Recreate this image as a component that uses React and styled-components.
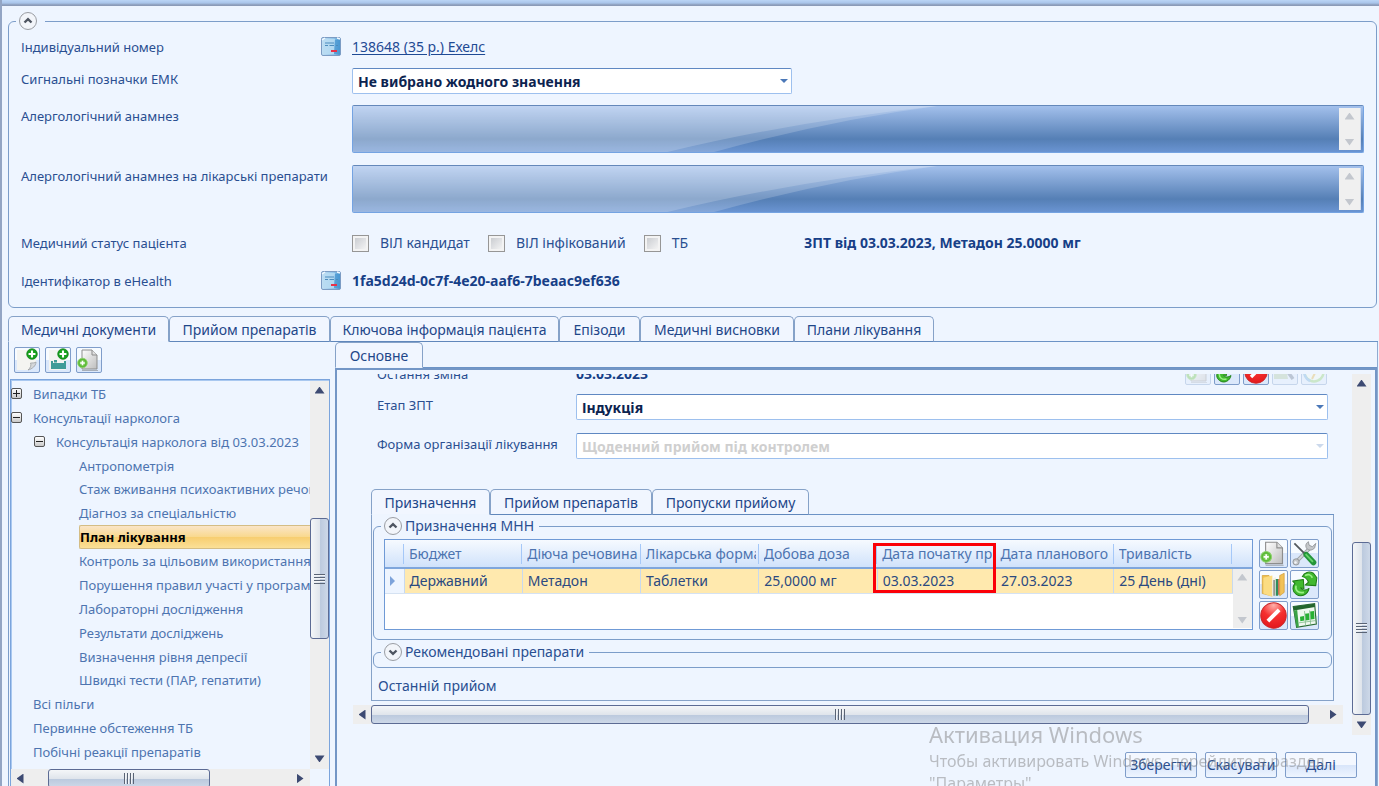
import React from 'react';
import styled, { createGlobalStyle, css } from 'styled-components';

const GlobalStyle = createGlobalStyle`
* { box-sizing: border-box; }
body {
    margin: 0;
    overflow: hidden;
    font-family: "Noto Sans", "Open Sans", sans-serif;
    font-size: 14px;
    line-height: 22px;
    color: #2a4f91;
}
button, select, textarea, input { font: inherit; color: inherit; margin: 0; }
`

const tree = [
    { text: 'Випадки ТБ', level: 0, mark: '+' },
    { text: 'Консультації нарколога', level: 0, mark: '-' },
    { text: 'Консультація нарколога від 03.03.2023', level: 1, mark: '-' },
    { text: 'Антропометрія', level: 2 },
    { text: 'Стаж вживання психоактивних речовин', level: 2 },
    { text: 'Діагноз за спеціальністю', level: 2 },
    { text: 'План лікування', level: 2, selected: true },
    { text: 'Контроль за цільовим використанням', level: 2 },
    { text: 'Порушення правил участі у програмі', level: 2 },
    { text: 'Лабораторні дослідження', level: 2 },
    { text: 'Результати досліджень', level: 2 },
    { text: 'Визначення рівня депресії', level: 2 },
    { text: 'Швидкі тести (ПАР, гепатити)', level: 2 },
    { text: 'Всі пільги', level: 0 },
    { text: 'Первинне обстеження ТБ', level: 0 },
    { text: 'Побічні реакції препаратів', level: 0 },
];

const mainTabs = [
    ['Медичні документи', 161],
    ['Прийом препаратів', 161],
    ['Ключова інформація пацієнта', 229],
    ['Епізоди', 81],
    ['Медичні висновки', 154],
    ['Плани лікування', 140],
];

const innerTabs = [
    ['Призначення', 119],
    ['Прийом препаратів', 162],
    ['Пропуски прийому', 157],
];

const columns = [
    ['Бюджет', 'Державний'],
    ['Діюча речовина', 'Метадон'],
    ['Лікарська форма', 'Таблетки'],
    ['Добова доза', '25,0000 мг'],
    ['Дата початку пр', '03.03.2023'],
    ['Дата планового', '27.03.2023'],
    ['Тривалість', '25 День (дні)'],
];

/* ---------- icons ---------- */

const CardIcon = () => (
    <svg width="20" height="20" viewBox="0 0 20 20">
        <defs>
            <linearGradient id="card" x1="0" y1="0" x2="1" y2="0">
                <stop offset="0" stopColor="#c3dff3" />
                <stop offset="0.65" stopColor="#8fc3e8" />
                <stop offset="1" stopColor="#3f90cf" />
            </linearGradient>
        </defs>
        <rect x="0.5" y="0.5" width="19" height="18" rx="1.5" fill="url(#card)" stroke="#7c9cc4" />
        <path d="M2 17V3l2-1h10L13 17z" fill="#b9dcf3" opacity="0.8" />
        <path d="M14 3h5v14h-6z" fill="#4b98d2" opacity="0.75" />
        <path d="M4 6h9M4 8.500h3M8.500 8.500h4.500M15 8.500h2" stroke="#4c8cbd" strokeWidth="1.200" />
        <path d="M10 14h6" stroke="#e8324a" strokeWidth="2" />
        <path d="M1 3l3-2M16 1l3 1" stroke="#f2f9ff" strokeWidth="1.500" />
    </svg>
);

function Plus({ cx, cy, r }) {
    const k = r * 0.65;
    return (
        <g>
            <circle cx={cx} cy={cy} r={r} fill="#17a01d" stroke="#0c7c14" strokeWidth="0.700" />
            <path
                d={`M${cx - k} ${cy}h${k * 2}M${cx} ${cy - k}v${k * 2}`}
                stroke="#fff"
                strokeWidth={r * 0.4}
            />
        </g>
    );
}

const NewPageIcon = () => (
    <svg width="24" height="24" viewBox="0 0 24 24">
        <path d="M2 2h19v13l-7 7H2z" fill="#f4f4f1" />
        <path d="M21 14c-1 1-4 1-5.500 1 1 2 0 5-2.500 7 4-1 8-4 8-8z" fill="#d6d8da" stroke="#9c9fa3" strokeWidth="0.800" />
        <Plus cx={17} cy={6} r={5.3} />
    </svg>
);

const NewBedIcon = () => (
    <svg width="24" height="24" viewBox="0 0 24 24">
        <rect x="3" y="2" width="17" height="20" fill="#f4f4f1" />
        <path d="M5 13h2v2h11v-2h2v6H5z" fill="#3f9c98" />
        <path d="M8 12h3v2.500H8z" fill="#3f9c98" />
        <path d="M5 20h15" stroke="#3f9c98" strokeWidth="2" />
        <Plus cx={17} cy={6} r={5.3} />
    </svg>
);

const PageIcon = () => (
    <svg width="24" height="24" viewBox="0 0 24 24">
        <defs>
            <linearGradient id="page" x1="0" y1="0" x2="1" y2="1">
                <stop offset="0" stopColor="#ffffff" />
                <stop offset="1" stopColor="#bdbdbd" />
            </linearGradient>
        </defs>
        <path d="M5 2h10l5 5v14H5z" fill="url(#page)" stroke="#8d8d8d" />
        <path d="M15 2v5h5" fill="#e0e0e0" stroke="#8d8d8d" />
        <path d="M5 22.500h16" stroke="#777" opacity="0.500" />
        <circle cx="5.500" cy="15" r="4.800" fill="#5dbb38" stroke="#8ed16f" strokeWidth="0.900" />
        <circle cx="5.500" cy="15" r="2.800" fill="#7fcc5c" />
        <path d="M3.200 15h4.600M5.500 12.700v4.600" stroke="#fff" strokeWidth="1.500" />
    </svg>
);

const ToolsIcon = () => (
    <svg width="24" height="24" viewBox="0 0 24 24">
        <path d="M17 7L5 19" stroke="#9fa4a9" strokeWidth="3.200" />
        <path d="M17 7L5 19" stroke="#d3d6d9" strokeWidth="1.400" />
        <path d="M15.500 1.500c-2.500 1.500-3 4-1.500 6s5 2 7-.500l1-4-3 3-3-1.500z" fill="#c4c7ca" stroke="#888c90" strokeWidth="0.700" />
        <circle cx="4.500" cy="19.500" r="2.800" fill="#c4c7ca" stroke="#888c90" strokeWidth="0.700" />
        <circle cx="4" cy="20" r="1.100" fill="#f4f7fb" />
        <path d="M3 3l10 10" stroke="#53585d" strokeWidth="1.600" />
        <path d="M13.500 13l6.500 7" stroke="#24953a" strokeWidth="5" strokeLinecap="round" />
        <path d="M13 12.500l6.500 7" stroke="#66d66a" strokeWidth="1.600" />
    </svg>
);

const FolderIcon = () => (
    <svg width="24" height="24" viewBox="0 0 24 24">
        <path d="M2 4h6l2 2v16l-8-2z" fill="#efc04f" stroke="#d09d33" strokeWidth="0.600" />
        <path d="M3 6l8-2v19l-8-3z" fill="#fbdc82" />
        <path d="M11 7l3-2v17h-3z" fill="#f3f1e4" />
        <path d="M12.500 8v14" stroke="#555" strokeWidth="0.900" />
        <path d="M14 7h2.200v15H14z" fill="#2f8d5c" />
        <path d="M16.200 7h1.300v14h-1.300z" fill="#d05a3a" />
        <path d="M17.500 4l4-2v17l-4 3z" fill="#f1c158" stroke="#cf9a34" strokeWidth="0.600" />
    </svg>
);

const RefreshIcon = () => (
    <svg width="24" height="24" viewBox="0 0 24 24">
        <g fill="#41b92f" stroke="#1f7d16" strokeWidth="0.900" strokeLinejoin="round">
            <path d="M10 5C12 1 16 0 20 2l3 4-1 7-9.500-.500 3-2.500C14.500 7 13 5.500 10 5z" />
            <path d="M1.500 9L11 7.500l.500 8-3-.500c1 2.500 5 2.500 7.500.500C15 21 9 24 4.500 20.500 1 18 1 14 3.500 11z" />
        </g>
        <path d="M12.500 4c3-1.500 5-1 6.500 2M4.500 13c-1 5 3 7 7 6" stroke="#9af084" strokeWidth="1.500" fill="none" />
    </svg>
);

const StopIcon = () => (
    <svg width="24" height="24" viewBox="0 0 24 24">
        <defs>
            <radialGradient id="stop" cx="0.5" cy="0.1" r="0.9">
                <stop offset="0" stopColor="#ffb0aa" />
                <stop offset="0.5" stopColor="#f53030" />
                <stop offset="1" stopColor="#e3181c" />
            </radialGradient>
        </defs>
        <circle cx="12" cy="12" r="11.300" fill="url(#stop)" stroke="#c8282b" strokeWidth="0.900" />
        <path d="M7 17L17 7" stroke="#fff" strokeWidth="3.400" />
    </svg>
);

const SheetIcon = () => (
    <svg width="24" height="24" viewBox="0 0 24 24">
        <path d="M2 4l19-2.500 1.500 18L5 22.500z" fill="#eef8ee" stroke="#2b6b34" strokeWidth="1" />
        <path d="M2 4l19-2.500.300 3L2.500 7.500z" fill="#23652d" />
        <path d="M2.500 7.500L5.500 7l1.500 15-2 .500z" fill="#3aa345" />
        <path d="M8 13l3.500-.500.300 4-3.500.500zM12.500 10.500l3.500-.500.400 6-3.500.500zM17 8.500l3.500-.500.400 7-3.500.500z" fill="#27b034" />
        <path d="M7 18.500l15-2M12 8l1 13.500M16.500 7.500l1 13.500" stroke="#6fae77" strokeWidth="0.600" />
    </svg>
);

const ImageIcon = () => (
    <svg width="24" height="24" viewBox="0 0 24 24">
        <path d="M1 19V9h12l2 10z" fill="#a9c39c" />
        <path d="M12 8l8 11" stroke="#62728a" strokeWidth="3.500" />
    </svg>
);

const ClockIcon = () => (
    <svg width="24" height="24" viewBox="0 0 24 24">
        <circle cx="12" cy="12" r="9.500" fill="#f3f8ef" stroke="#8ccf6b" strokeWidth="2.500" />
        <path d="M3 9a9.500 9.500 0 0 0 5 12" stroke="#6aa9de" strokeWidth="2.500" fill="none" />
        <path d="M10 19l6-12" stroke="#e2b33c" strokeWidth="2" />
    </svg>
);

const Expander = ({ open, label }) => (
    <RoundButton aria-label={label}>
        <svg width="10" height="10" viewBox="0 0 10 10">
            <path
                d={open ? 'M1.500 6.500L5 3.200l3.500 3.300' : 'M1.500 3.500L5 6.800l3.500-3.300'}
                fill="none"
                stroke="#4e5561"
                strokeWidth="2.400"
            />
        </svg>
    </RoundButton>
);

/* ---------- scroll bar ---------- */

function ScrollBar({ horizontal, parts }) {
    return (
        <Track $horizontal={horizontal} $parts={parts} aria-hidden="true">
            <Arrow $dir={horizontal ? 'left' : 'up'} $muted={!parts} />
            {parts && <i />}
            {parts && <Thumb $horizontal={horizontal}><Grip $horizontal={horizontal} /></Thumb>}
            <i />
            <Arrow $dir={horizontal ? 'right' : 'down'} $muted={!parts} />
        </Track>
    );
}

function TabStrip({ tabs }) {
    return (
        <Tabs role="tablist">
            {tabs.map(([text, width], i) => (
                <Tab key={text} role="tab" aria-selected={i === 0} $active={i === 0} $width={width}>{text}</Tab>
            ))}
        </Tabs>
    );
}

function GlossyField({ id }) {
    return (
        <Glossy>
            <svg viewBox="0 0 1012 47" preserveAspectRatio="none" aria-hidden="true">
                <path d="M0 0H585Q440 16 315 47H0z" fill="#fff" opacity="0.18" />
                <path d="M0 0H586Q480 14 362 47H0z" fill="#fff" opacity="0.18" />
            </svg>
            <textarea id={id} readOnly />
            <ScrollBar />
        </Glossy>
    );
}

/* ---------- page ---------- */

export default function App() {
    return (
        <Window>
            <GlobalStyle />
            <Page>
                <Group>
                    <legend><Expander open label="Згорнути" /></legend>
                    <Patient />
                </Group>
                <TabArea>
                    <TabStrip tabs={mainTabs} />
                    <Workspace>
                        <Sidebar />
                        <Plan />
                    </Workspace>
                </TabArea>
            </Page>
            <Watermark>
                <strong>Активация Windows</strong>
                <span>Чтобы активировать Windows, перейдите в раздел</span>
                <span>"Параметры".</span>
            </Watermark>
        </Window>
    );
}

function Patient() {
    return (
        <PatientRows>
            <PatientRow $height={32}>
                <Caption as="span">Індивідуальний номер</Caption>
                <CardIcon />
                <a href="#patient">138648 (35 р.) Ехелс</a>
            </PatientRow>
            <PatientRow $height={37} $top>
                <Caption htmlFor="signals">Сигнальні позначки ЕМК</Caption>
                <i />
                <Combo $narrow>
                    <select id="signals"><option>Не вибрано жодного значення</option></select>
                </Combo>
            </PatientRow>
            <PatientRow $height={60} $top>
                <Caption htmlFor="allergy">Алергологічний анамнез</Caption>
                <i />
                <GlossyField id="allergy" />
            </PatientRow>
            <PatientRow $height={60} $top>
                <Caption htmlFor="drugs">Алергологічний анамнез на лікарські препарати</Caption>
                <i />
                <GlossyField id="drugs" />
            </PatientRow>
            <PatientRow $height={46}>
                <Caption as="span">Медичний статус пацієнта</Caption>
                <i />
                <Status>
                    <Checks>
                        {['ВІЛ кандидат', 'ВІЛ інфікований', 'ТБ'].map(text => (
                            <Check key={text}><input type="checkbox" />{text}</Check>
                        ))}
                    </Checks>
                    <b>ЗПТ від 03.03.2023, Метадон 25.0000 мг</b>
                </Status>
            </PatientRow>
            <PatientRow $height={30}>
                <Caption as="span">Ідентифікатор в eHealth</Caption>
                <CardIcon />
                <b>1fa5d24d-0c7f-4e20-aaf6-7beaac9ef636</b>
            </PatientRow>
        </PatientRows>
    );
}

function Sidebar() {
    return (
        <Side>
            <SideTools>
                <ToolButton aria-label="Новий документ"><NewPageIcon /></ToolButton>
                <ToolButton aria-label="Новий випадок"><NewBedIcon /></ToolButton>
                <ToolButton aria-label="Додати"><PageIcon /></ToolButton>
            </SideTools>
            <TreeBox>
                <TreeList>
                    {tree.map(item => (
                        <TreeItem key={item.text} $level={item.level}>
                            {item.mark && <Mark aria-label={item.mark === '+' ? 'Розгорнути' : 'Згорнути'} $plus={item.mark === '+'} />}
                            <TreeText $selected={item.selected}>{item.text}</TreeText>
                        </TreeItem>
                    ))}
                </TreeList>
                <ScrollBar parts={[118, 120, 109]} />
                <ScrollBar horizontal parts={[19, 161, 80]} />
            </TreeBox>
        </Side>
    );
}

function Plan() {
    return (
        <PlanPane>
            <Tabs role="tablist">
                <Tab role="tab" aria-selected $active $width={88}>Основне</Tab>
            </Tabs>
            <PlanBody>
                <ScrollArea>
                    <div>
                        <Form>
                            <CutRow>
                                <Caption as="span">Остання зміна</Caption>
                                <b>03.03.2023</b>
                                <CutTools>
                                    <ToolButton disabled aria-label="Додати"><PageIcon /></ToolButton>
                                    <ToolButton aria-label="Оновити"><RefreshIcon /></ToolButton>
                                    <ToolButton aria-label="Видалити"><StopIcon /></ToolButton>
                                    <ToolButton disabled aria-label="Переглянути"><ImageIcon /></ToolButton>
                                    <ToolButton disabled aria-label="Історія"><ClockIcon /></ToolButton>
                                </CutTools>
                            </CutRow>
                            <FormRow>
                                <Caption htmlFor="stage">Етап ЗПТ</Caption>
                                <Combo>
                                    <select id="stage"><option>Індукція</option></select>
                                </Combo>
                            </FormRow>
                            <FormRow>
                                <Caption htmlFor="form">Форма організації лікування</Caption>
                                <Combo $disabled>
                                    <select id="form" disabled><option>Щоденний прийом під контролем</option></select>
                                </Combo>
                            </FormRow>
                        </Form>
                        <Prescriptions />
                        <ScrollBar horizontal parts={[0, 940, 14]} />
                    </div>
                    <ScrollBar parts={[149, 172, 0]} />
                </ScrollArea>
                <Actions>
                    <button>Зберегти</button>
                    <button>Скасувати</button>
                    <button>Далі</button>
                </Actions>
            </PlanBody>
        </PlanPane>
    );
}

function Prescriptions() {
    return (
        <Inner>
            <TabStrip tabs={innerTabs} />
            <InnerPanel>
                <Group $inner>
                    <legend><Expander open label="Згорнути" />Призначення МНН</legend>
                    <GridRow>
                        <GridBox>
                            <DataTable>
                                <colgroup>
                                    <col width="19" />
                                    {columns.map(([name]) => <col key={name} />)}
                                    <col width="20" />
                                </colgroup>
                                <thead>
                                    <tr>
                                        <th aria-label="Рядок" />
                                        {columns.map(([name], i) => (
                                            <th key={name} scope="col">
                                                <span>{name}</span>
                                                {i === 4 && <Highlight />}
                                            </th>
                                        ))}
                                        <th aria-label="Прокрутка" />
                                    </tr>
                                </thead>
                                <tbody>
                                    <tr>
                                        <Pointer />
                                        {columns.map(([name, value]) => <td key={name}>{value}</td>)}
                                        <ScrollCell rowSpan="2"><ScrollBar /></ScrollCell>
                                    </tr>
                                    <tr><Filler colSpan="8" /></tr>
                                </tbody>
                            </DataTable>
                        </GridBox>
                        <GridTools>
                            <ToolButton $large aria-label="Додати"><PageIcon /></ToolButton>
                            <ToolButton $large aria-label="Налаштувати"><ToolsIcon /></ToolButton>
                            <ToolButton $large aria-label="Архів"><FolderIcon /></ToolButton>
                            <ToolButton $large aria-label="Оновити"><RefreshIcon /></ToolButton>
                            <ToolButton $large aria-label="Видалити"><StopIcon /></ToolButton>
                            <ToolButton $large aria-label="Експорт"><SheetIcon /></ToolButton>
                        </GridTools>
                    </GridRow>
                </Group>
                <Group $inner>
                    <legend><Expander label="Розгорнути" />Рекомендовані препарати</legend>
                    <Collapsed />
                </Group>
                <LastIntake>Останній прийом</LastIntake>
            </InnerPanel>
        </Inner>
    );
}

/* ---------- styles ---------- */

const Window = styled.div`
    height: 100vh;
    display: flex;
    overflow: hidden;
    border-left: 2px solid #93a5c4;
    padding-top: 6px;
    background: linear-gradient(#bbd5f6 0, #a9c5ea 3px, #8b9bb8 5px, #8b9bb8 6px, #eef5ff 6px);
`

const Page = styled.main`
    flex: 1;
    min-width: 0;
    display: flex;
    flex-direction: column;
    padding: 6px 1px 0 6px;
`

const Group = styled.fieldset`
    min-width: 0;
    margin: 0 ${props => props.$inner ? "0" : "1px"} 0 0;
    padding: 0 12px 0 10px;
    border: 1px solid #7c9dc9;
    border-radius: 6px;
    legend {
        display: flex;
        align-items: center;
        gap: 3px;
        height: 18px;
        margin-left: -3px;
        padding: 0 ${props => props.$inner ? "5px" : "8px"} 0 3px;
    }
    & + & { margin-top: 3px; }
`

const RoundButton = styled.button`
    width: 18px;
    height: 18px;
    display: grid;
    place-items: center;
    padding: 0;
    border: 1px solid #9a9da3;
    border-radius: 50%;
    background: #f2f5fa;
`

const Caption = styled.label`
    font-size: 13px;
`

const PatientRows = styled.div`
    padding: 1px 0 11px 2px;
`

const PatientRow = styled.div`
    display: grid;
    grid-template-columns: 300px 31px minmax(0, 1fr);
    align-items: ${props => props.$top ? "start" : "center"};
    min-height: ${props => props.$height}px;
    padding-top: ${props => props.$top ? "5px" : "0"};
    white-space: nowrap;
    a { color: #1f4a94; text-underline-offset: 2px; }
    b { color: #173f87; }
`

const Combo = styled.div`
    position: relative;
    height: 26px;
    width: ${props => props.$narrow ? "440px" : "auto"};
    max-width: 100%;
    select {
        width: 100%;
        height: 100%;
        appearance: none;
        padding: 2px 20px 0 5px;
        border: 1px solid #9dc0ee;
        border-top-color: #5f88c2;
        border-radius: 2px;
        background: #fff;
        color: #0c234f;
        font-weight: 700;
        opacity: 1;
    }
    select:disabled { color: #cfcfcf; }
    &:after {
        content: "";
        position: absolute;
        right: 4px;
        top: 11px;
        border: 4px solid transparent;
        border-top-color: ${props => props.$disabled ? "#ccd9ec" : "#4b78b8"};
        border-bottom: 0;
    }
`

const Glossy = styled.div`
    position: relative;
    display: flex;
    height: 48px;
    padding: 2px;
    border: 1px solid #74a3e2;
    border-top-color: #6488ba;
    border-radius: 2px;
    background: linear-gradient(#a3c0ec, #557fb5 72%, #6a94d2);
    > svg {
        position: absolute;
        inset: 0;
        width: 100%;
        height: 100%;
    }
    textarea {
        position: relative;
        flex: 1;
        min-width: 0;
        border: 0;
        resize: none;
        background: transparent;
    }
    > div { width: 22px; border-right: 1px solid #cfdcf0; background: #f0f0f0; }
`

const Status = styled.div`
    display: grid;
    grid-template-columns: 452px 1fr;
    align-items: center;
`

const Checks = styled.div`
    display: flex;
    gap: 18px;
`

const Check = styled.label`
    display: flex;
    align-items: center;
    gap: 11px;
    input {
        appearance: none;
        width: 17px;
        height: 17px;
        border: 1px solid #969696;
        background: linear-gradient(135deg, #c3c6cb, #fafafa);
        box-shadow: inset 0 0 0 2px #f3f3f3;
    }
`

const TabArea = styled.section`
    flex: 1;
    min-height: 0;
    display: flex;
    flex-direction: column;
    margin-top: 8px;
`

const Tabs = styled.div`
    display: flex;
    height: 26px;
    flex: none;
    &:after { content: ""; flex: 1; border-bottom: 1px solid #6c93c6; }
`

const Tab = styled.button`
    width: ${props => props.$width}px;
    padding: 2px 0 0;
    border: 1px solid #86a2c8;
    border-bottom: 1px solid ${props => props.$active ? "#eef5ff" : "#6087bb"};
    border-radius: 5px 5px 0 0;
    background: #f1f6ff;
    white-space: nowrap;
    overflow: hidden;
    color: #1f4789;
`

const Workspace = styled.div`
    flex: 1;
    min-height: 0;
    display: grid;
    grid-template-columns: 322px minmax(0, 1fr);
    gap: 5px;
`

const Side = styled.aside`
    display: flex;
    flex-direction: column;
    min-height: 0;
    padding-left: 1px;
    border-left: 1px solid #7c9dc9;
`

const SideTools = styled.div`
    display: flex;
    gap: 5px;
    padding: 5px 4px 6px;
`

const ToolButton = styled.button`
    width: ${props => props.$large ? "29px" : "26px"};
    height: ${props => props.$large ? "29px" : "26px"};
    display: grid;
    place-items: center;
    padding: 0;
    border: 1px solid #7f9dca;
    border-radius: 2px;
    background: linear-gradient(#f7fbff 50%, #dbe8fb 50%);
    overflow: hidden;
    svg {
        width: ${props => props.$large ? "27px" : "24px"};
        height: ${props => props.$large ? "27px" : "24px"};
    }
    &:disabled { opacity: 0.35; }
`

const TreeBox = styled.div`
    display: grid;
    grid-template-columns: minmax(0, 1fr) 19px;
    align-content: start;
    border: 1px solid #7ba4dc;
    box-shadow: inset 1px 1px 0 #a9c8f0;
    padding: 1px 0 0;
    flex: 1;
`

const TreeList = styled.ul`
    display: grid;
    grid-auto-rows: 1fr;
    height: 388px;
    margin: 0;
    padding: 1px 0 5px;
    list-style: none;
    overflow: hidden;
    font-size: 13px;
`

const TreeItem = styled.li`
    display: flex;
    align-items: center;
    min-width: 0;
    padding-left: ${props => props.$level * 23}px;
    &:before { content: ""; order: 1; flex: none; width: 22px; }
    &:has(button):before { width: 11px; }
`

const Mark = styled.button`
    position: relative;
    flex: none;
    width: 11px;
    height: 11px;
    padding: 0;
    border: 1px solid #555;
    border-radius: 2px;
    background: linear-gradient(#fff, #c9c9c9);
    &:before, &:after {
        content: "";
        position: absolute;
        background: #222;
    }
    &:before { left: 1px; right: 1px; top: 4px; height: 1px; }
    &:after { ${props => props.$plus && css`top: 1px; bottom: 1px; left: 4px; width: 1px;`} }
`

const TreeText = styled.span`
    order: 2;
    flex: ${props => props.$selected ? "1" : "none"};
    white-space: nowrap;
    color: #4d74b0;
    ${props => props.$selected && css`
        border: 1px solid #d4bd85;
        border-right: 0;
        border-radius: 2px 0 0 2px;
        background: linear-gradient(#fae5c8, #f9d98f 48%, #f7cd6f 50%, #fbe097);
        color: #000;
        font-weight: 700;
    `}
`

const Track = styled.div`
    position: relative;
    display: grid;
    background: #eeeeee;
    grid-template: ${props => {
        const main = props.$parts
            ? `18px ${props.$parts.map(n => `minmax(0, ${n}fr)`).join(' ')} 20px`
            : "16px 1fr 16px";
        return props.$horizontal ? `19px / ${main}` : `${main} / 1fr`;
    }};
`

const arrows = {
    up: "polygon(50% 0, 100% 100%, 0 100%)",
    down: "polygon(0 0, 100% 0, 50% 100%)",
    left: "polygon(0 50%, 100% 0, 100% 100%)",
    right: "polygon(0 0, 100% 50%, 0 100%)",
};

const Arrow = styled.span`
    place-self: center;
    width: ${props => props.$dir === 'up' || props.$dir === 'down' ? "10px" : "7px"};
    height: ${props => props.$dir === 'up' || props.$dir === 'down' ? "7px" : "10px"};
    clip-path: ${props => arrows[props.$dir]};
    background: ${props => props.$muted ? "#c3c7ce" : "#3d4a72"};
`

const Thumb = styled.span`
    display: grid;
    place-items: center;
    border: 1px solid #5c6b94;
    border-radius: 3px;
    background: linear-gradient(${props => props.$horizontal ? "180deg" : "90deg"}, #f4f6f8, #e0e5ec 50%, #bccade 55%, #cdd8e8);
`

const Grip = styled.span`
    width: ${props => props.$horizontal ? "10px" : "11px"};
    height: ${props => props.$horizontal ? "11px" : "10px"};
    background: repeating-linear-gradient(${props => props.$horizontal ? "90deg" : "180deg"}, #5a6475 0 1px, #f2f4f7 1px 2px, transparent 2px 3px);
`

const PlanPane = styled.section`
    display: flex;
    flex-direction: column;
    min-height: 0;
    border-right: 1px solid #8fabd2;
`

const PlanBody = styled.div`
    flex: 1;
    padding: 4px 4px 0 16px;
    border: 2px solid #7396c6;
    border-bottom: 0;
`

const ScrollArea = styled.div`
    display: grid;
    grid-template-columns: minmax(0, 1fr) 19px;
    gap: 9px;
    > div:first-child { padding-bottom: 11px; }
`

const Form = styled.div`
    padding: 0 15px 0 24px;
`

const FormRow = styled.div`
    display: grid;
    grid-template-columns: 199px minmax(0, 1fr);
    margin-top: 9px;
    white-space: nowrap;
    & + & { margin-top: 13px; }
    b { color: #173f87; }
`

const CutRow = styled(FormRow)`
    grid-template-columns: 199px 1fr auto;
    align-content: end;
    align-items: end;
    height: 11px;
    margin-top: 0;
    overflow: hidden;
    & + ${FormRow} { margin-top: 9px; }
`

const CutTools = styled.div`
    display: flex;
    gap: 3px;
    padding-right: 1px;
`

const Inner = styled.div`
    margin: 30px 9px 4px 18px;
`

const InnerPanel = styled.div`
    padding: 2px 1px 3px;
    border: 1px solid #86a2c8;
    border-top: 0;
`

const GridRow = styled.div`
    display: flex;
    gap: 6px;
    padding: 4px 0 9px;
`

const GridBox = styled.div`
    flex: 1;
    min-width: 0;
    border: 1px solid #6f9ad6;
    background: #fff;
`

const DataTable = styled.table`
    width: 100%;
    table-layout: fixed;
    border-collapse: collapse;
    th {
        position: relative;
        height: 28px;
        padding: 1px 3px 0 5px;
        border-bottom: 2px solid #7fa6dc;
        background:
            linear-gradient(#a5c8f8, #a5c8f8) right 4px / 1px 20px no-repeat,
            linear-gradient(#f6faff, #d0e2fb);
        font-weight: 400;
        text-align: left;
        color: #4d74b0;
    }
    th:last-child { background: linear-gradient(#f6faff, #d0e2fb); }
    th span { display: block; overflow: hidden; white-space: nowrap; }
    td {
        height: 25px;
        padding: 0 0 0 5px;
        border-right: 1px solid #c8d9ee;
        border-bottom: 1px solid #d5e2f2;
        background: #ffe9ae;
        color: #2b4a80;
        white-space: nowrap;
        overflow: hidden;
    }
`

const Pointer = styled.td`
    && { background: #eef5ff; }
    &:before {
        content: "";
        display: block;
        width: 0;
        border: 5px solid transparent;
        border-left-color: #7da3da;
        border-right: 0;
    }
`

const Filler = styled.td`
    && { height: 34px; border: 0; background: #fff; }
`

const ScrollCell = styled.td`
    && { padding: 0; border: 0; background: #eee; }
    > div { height: 59px; }
`

/* marks the column the note is about */
const Highlight = styled.i`
    position: absolute;
    z-index: 1;
    left: -4px;
    right: -1px;
    top: 3px;
    height: 50px;
    border: 3px solid #fb0007;
    pointer-events: none;
`

const GridTools = styled.div`
    display: grid;
    grid-template-columns: 29px 29px;
    gap: 2px;
    align-content: start;
`

const Collapsed = styled.div`
    height: 6px;
`

const LastIntake = styled.div`
    padding: 7px 5px 0;
`

const Actions = styled.div`
    display: flex;
    justify-content: flex-end;
    gap: 8px;
    padding: 17px 14px 0 0;
    button {
        width: 72px;
        height: 26px;
        padding: 0;
        border: 1px solid #7f9dca;
        border-radius: 2px;
        background: linear-gradient(#f4f8ff 50%, #d8e5fa 50%, #eef5ff);
        white-space: nowrap;
    }
`

const Watermark = styled.div`
    position: fixed;
    right: 46px;
    top: 718px;
    width: 404px;
    display: flex;
    flex-direction: column;
    color: rgba(120, 120, 120, 0.45);
    white-space: nowrap;
    pointer-events: none;
    strong { font-size: 22px; line-height: 32px; font-weight: 400; }
    span { font-size: 16px; line-height: 22px; }
`
